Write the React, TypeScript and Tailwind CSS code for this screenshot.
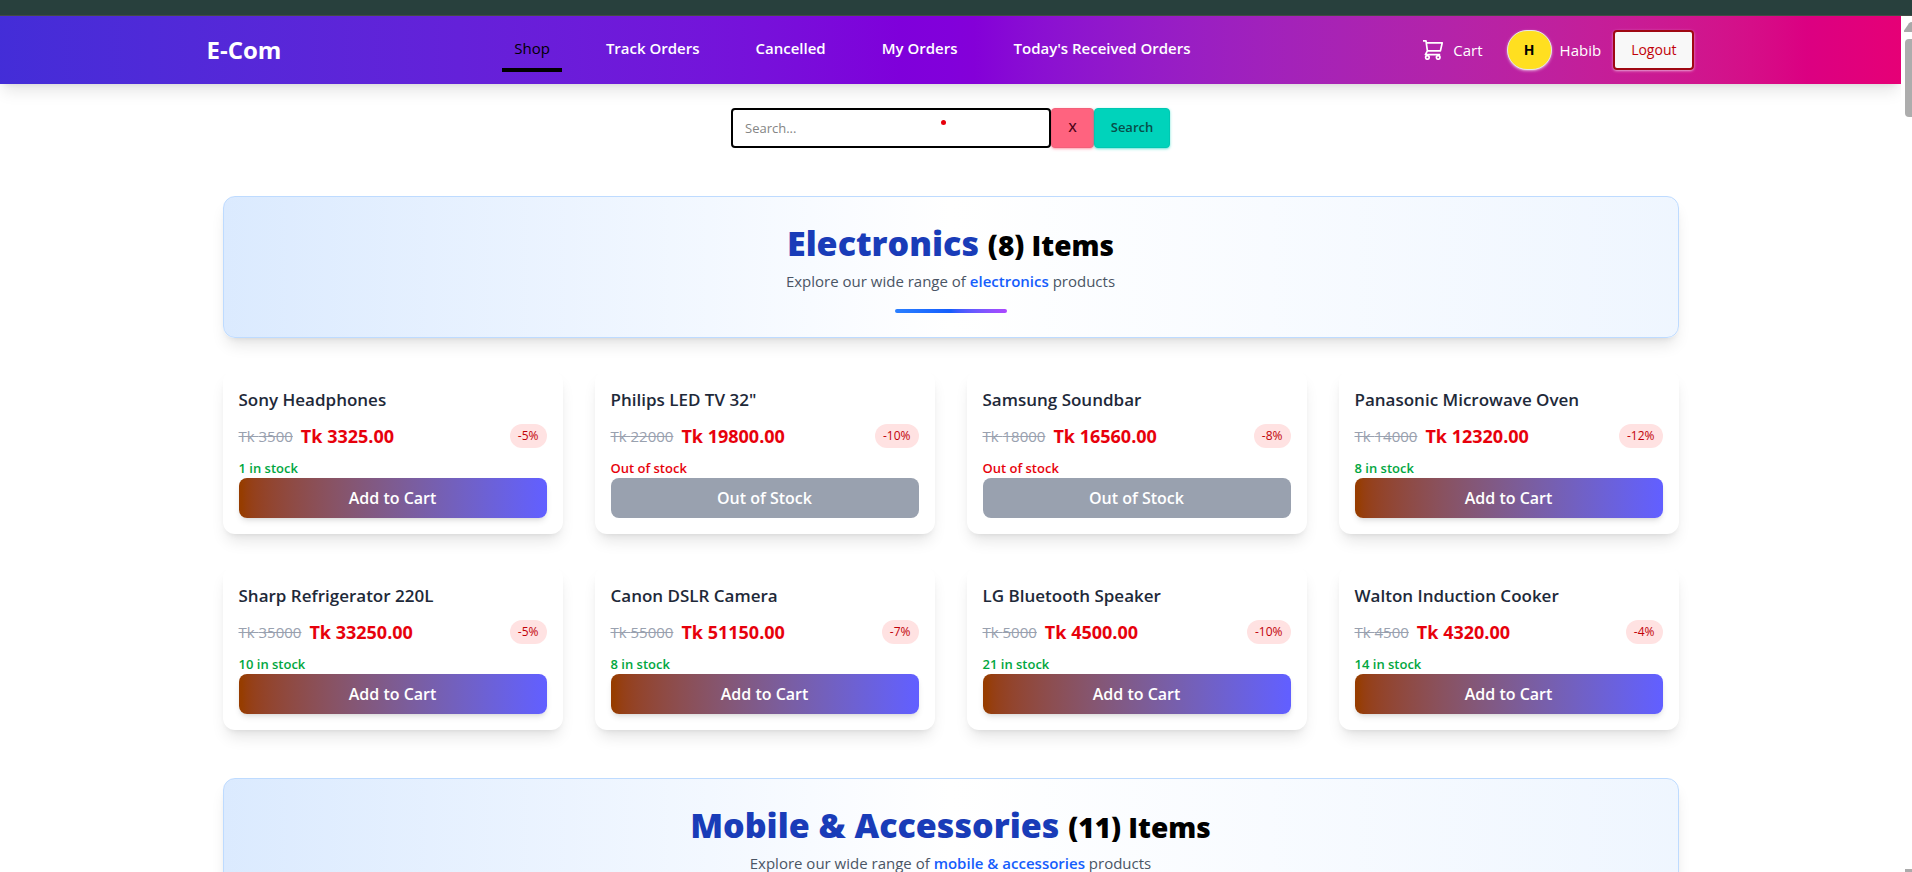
type Product = {
  name: string;
  price: number;
  discount: number;
  stock: number;
};

const electronics: Product[] = [
  { name: "Sony Headphones", price: 3500, discount: 5, stock: 1 },
  { name: 'Philips LED TV 32"', price: 22000, discount: 10, stock: 0 },
  { name: "Samsung Soundbar", price: 18000, discount: 8, stock: 0 },
  { name: "Panasonic Microwave Oven", price: 14000, discount: 12, stock: 8 },
  { name: "Sharp Refrigerator 220L", price: 35000, discount: 5, stock: 10 },
  { name: "Canon DSLR Camera", price: 55000, discount: 7, stock: 8 },
  { name: "LG Bluetooth Speaker", price: 5000, discount: 10, stock: 21 },
  { name: "Walton Induction Cooker", price: 4500, discount: 4, stock: 14 },
];

const links = ["Track Orders", "Cancelled", "My Orders", "Today's Received Orders"];

function CartIcon() {
  return (
    <svg
      className="size-5"
      viewBox="0 0 20 20"
      fill="none"
      stroke="currentColor"
      strokeWidth="1.7"
      strokeLinejoin="round"
      aria-hidden="true"
    >
      <path d="M0 .9h3l1.4 10h13l1.8-8H3.4M4.4 10.9 2.4 14.6h14.8" />
      <circle cx="4.4" cy="17.4" r="1.8" />
      <circle cx="15.2" cy="17.4" r="1.8" />
    </svg>
  );
}

function Header() {
  return (
    <header className="bg-linear-to-r from-indigo-700 via-purple-700 to-pink-600 shadow-lg">
      <div className="mx-auto flex max-w-[1536px] items-center justify-between px-6 py-3 text-white">
        <a href="#" className="text-2xl font-bold">
          E-Com
        </a>
        <nav className="flex gap-8 text-[15px]/6">
          <a href="#" className="border-b-4 border-black px-3 py-2 text-[15px]/6 font-medium text-black">
            Shop
          </a>
          {links.map((label) => (
            <a key={label} href="#" className="border-b-4 border-transparent px-3 py-2 font-semibold">
              {label}
            </a>
          ))}
        </nav>
        <div className="flex items-center text-[15px]/6">
          <a href="#" className="mr-6 flex items-center gap-2.5">
            <CartIcon />
            Cart
          </a>
          <div className="mr-2 flex h-10 w-[45px] items-center justify-center rounded-full border border-gray-200 bg-yellow-300 text-sm font-bold text-black shadow-sm shadow-white/50">
            H
          </div>
          <span className="mr-3">Habib</span>
          <button
            type="button"
            className="h-10 rounded border-2 border-red-800 bg-[#f8f8f8] px-4 text-sm font-medium text-red-700 shadow-sm shadow-white/50"
          >
            Logout
          </button>
        </div>
      </div>
    </header>
  );
}

function SearchBar() {
  return (
    <form className="flex justify-center pt-6" onSubmit={(e) => e.preventDefault()}>
      <div className="relative">
        <input
          type="text"
          aria-label="Search products"
          placeholder="Search..."
          className="block h-10 w-80 rounded border-2 border-black bg-white px-3 text-[13px] placeholder:text-[#858585]"
        />
        <span className="absolute top-3 left-[210px] size-[5px] rounded-full bg-red-600" />
      </div>
      <button
        type="button"
        aria-label="Clear search"
        className="h-10 w-[43px] rounded border border-[#f2607a] bg-[#ff637f] text-[13px] font-semibold text-[#4d0218] shadow-sm shadow-[#ff637f]/50"
      >
        X
      </button>
      <button
        type="submit"
        className="h-10 w-[76px] rounded border border-[#00c8b2] bg-[#00d3bb] text-[13px] font-semibold text-[#084d49] shadow-sm shadow-[#00d3bb]/50"
      >
        Search
      </button>
    </form>
  );
}

function SectionBanner({ title, count }: { title: string; count: number }) {
  return (
    <div className="rounded-xl border border-blue-200 bg-linear-to-r from-blue-100 via-white to-blue-50 p-6 text-center shadow-lg">
      <h2 className="text-[34px]/11 font-extrabold text-blue-800">
        {title} <span className="text-[28px]/10 text-black">({count}) Items</span>
      </h2>
      <p className="mt-1 text-[15px]/6 text-gray-600">
        Explore our wide range of{" "}
        <span className="font-semibold text-blue-600">{title.toLowerCase()}</span> products
      </p>
      <div className="mx-auto mt-4 h-1 w-28 rounded-full bg-linear-to-r from-blue-500 via-blue-600 to-purple-500" />
    </div>
  );
}

function ProductCard({ product }: { product: Product }) {
  const { name, price, discount, stock } = product;
  const discounted = (price * (100 - discount)) / 100;
  return (
    <article className="rounded-xl bg-white p-4 shadow-lg">
      <h3 className="text-[17px]/7 font-semibold text-gray-800">{name}</h3>
      <div className="mt-2 flex h-7 items-center gap-2">
        <s className="text-[15px]/6 text-gray-400">Tk {price}</s>
        <span className="text-lg/7 font-bold text-red-600">Tk {discounted.toFixed(2)}</span>
        <span className="ml-auto rounded-full bg-red-100 px-2 py-1 text-xs font-medium text-red-700">
          -{discount}%
        </span>
      </div>
      {stock > 0 ? (
        <p className="mt-2 text-[13px]/5 font-semibold text-green-600">{stock} in stock</p>
      ) : (
        <p className="mt-2 text-[13px]/5 font-semibold text-red-600">Out of stock</p>
      )}
      {stock > 0 ? (
        <button
          type="button"
          className="h-10 w-full rounded-lg bg-linear-to-r from-amber-800 to-indigo-500 text-base font-semibold text-white shadow-md"
        >
          Add to Cart
        </button>
      ) : (
        <button
          type="button"
          disabled
          className="h-10 w-full rounded-lg bg-gray-400 text-base font-semibold text-white"
        >
          Out of Stock
        </button>
      )}
    </article>
  );
}

function ScrollTrack() {
  return (
    <div className="flex w-[11px] shrink-0 flex-col items-end overflow-hidden" aria-hidden="true">
      <svg className="mt-1.5 mb-[7px] h-2.5 w-2 shrink-0 text-[#a9a9a9]" viewBox="0 0 8 10" fill="currentColor">
        <path d="M0 8.6 5 1.2Q6 0 8 0V10H1Q-.6 10 0 8.6Z" />
      </svg>
      <div className="h-[78px] w-[7px] shrink-0 rounded-l bg-[#adadad]" />
      <div className="mt-auto h-[3px] w-[7px] bg-[#ababab]" />
    </div>
  );
}

export default function App() {
  return (
    <div className="flex h-screen flex-col overflow-hidden bg-white font-['Segoe_UI','Open_Sans','Noto_Sans',sans-serif]">
      <div className="h-4 shrink-0 border-b border-[#454a45] bg-[#28403d]" />
      <div className="flex min-h-0 flex-1">
        <div className="min-w-0 flex-1 overflow-hidden">
          <Header />
          <SearchBar />
          <main className="mx-auto max-w-[1536px] px-10 pt-12">
            <section className="mb-12">
              <SectionBanner title="Electronics" count={8} />
              <div className="mt-8 grid grid-cols-4 gap-8">
                {electronics.map((product) => (
                  <ProductCard key={product.name} product={product} />
                ))}
              </div>
            </section>
            <section>
              <SectionBanner title="Mobile & Accessories" count={11} />
            </section>
          </main>
        </div>
        <ScrollTrack />
      </div>
    </div>
  );
}
